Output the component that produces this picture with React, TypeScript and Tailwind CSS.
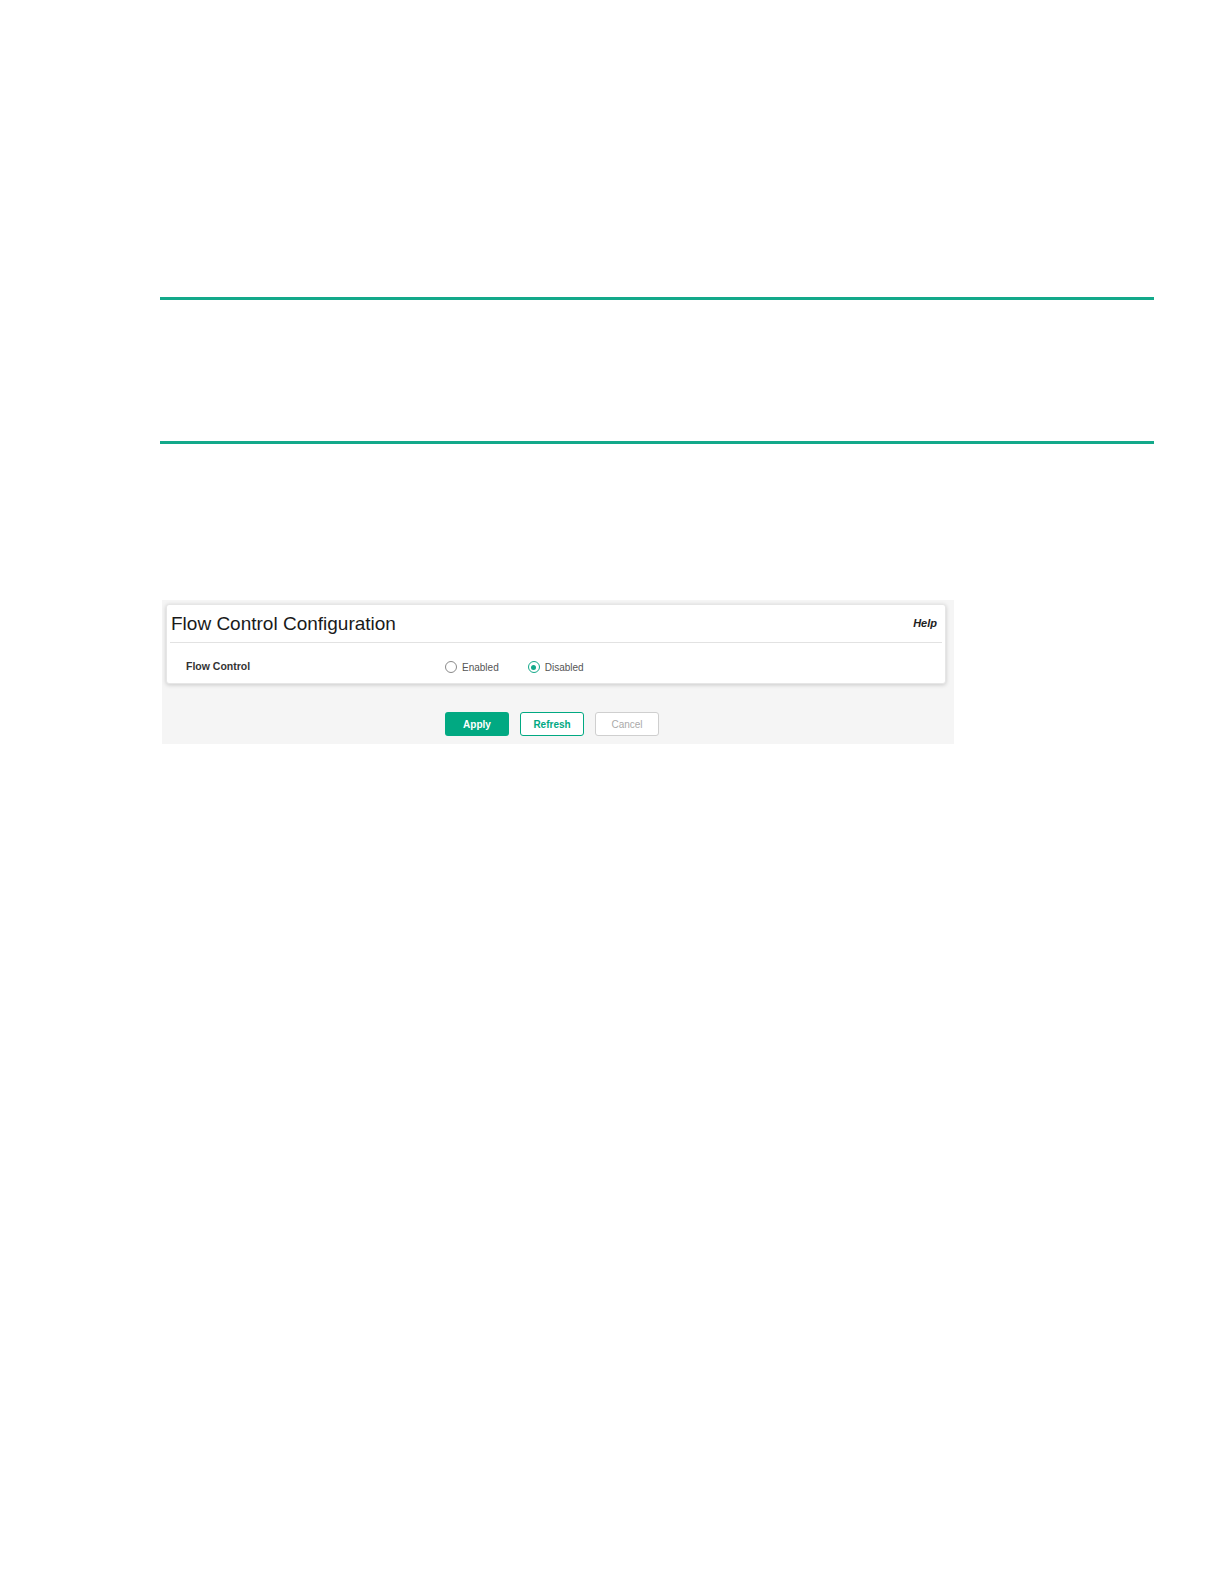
export default function App() {
    return (
        <div
            className="min-h-[1584px] w-[1224px] bg-white pl-[160px] pt-[297px]"
            style={{ fontFamily: '"Liberation Sans", Arial, sans-serif' }}
        >
            <div className="h-[3px] w-[994px] bg-[#13a98a]" />
            <div className="mt-[141px] h-[3px] w-[994px] bg-[#13a98a]" />

            <div className="ml-[2px] mt-[156px] w-[792px] bg-[#f5f5f5] pb-[8px] pl-[4px] pr-[8px] pt-[4px]">
                <div className="w-[780px] rounded-[3px] border border-[#e6e6e6] bg-white shadow-[0_1px_4px_rgba(0,0,0,0.18)]">
                    <div className="flex h-[37px] items-center justify-between pl-[4px] pr-[8px]">
                        <h1 className="text-[19px] leading-none text-[#1a1a1a]">
                            Flow Control Configuration
                        </h1>
                        <span className="text-[11px] font-bold italic text-[#222]">Help</span>
                    </div>
                    <div className="mx-[3px] h-px bg-[#e2e2e2]" />
                    <div className="box-border flex h-[40px] items-center pt-[8px]">
                        <label className="w-[278px] pl-[19px] text-[10.5px] font-bold text-[#333]">
                            Flow Control
                        </label>
                        <div className="flex items-center gap-[29px] text-[10px] text-[#555]">
                            <label className="flex items-center gap-[5px]">
                                <span className="box-border h-[12px] w-[12px] rounded-full border-[1.5px] border-[#8a8a8a] bg-white" />
                                Enabled
                            </label>
                            <label className="flex items-center gap-[5px]">
                                <span className="box-border flex h-[12px] w-[12px] items-center justify-center rounded-full border-[1.5px] border-[#13a98a] bg-white">
                                    <span className="h-[5px] w-[5px] rounded-full bg-[#13a98a]" />
                                </span>
                                Disabled
                            </label>
                        </div>
                    </div>
                </div>

                <div className="mt-[28px] flex gap-[11px] pl-[279px]">
                    <button className="h-[24px] w-[64px] rounded-[3px] bg-[#01a982] text-[10px] font-bold text-white">
                        Apply
                    </button>
                    <button className="h-[24px] w-[64px] rounded-[3px] border-[1.5px] border-[#01a982] bg-white text-[10px] font-bold text-[#01a982]">
                        Refresh
                    </button>
                    <button className="h-[24px] w-[64px] rounded-[3px] border-[1.5px] border-[#cfcfcf] bg-white text-[10px] text-[#aaa]">
                        Cancel
                    </button>
                </div>
            </div>
        </div>
    );
}
